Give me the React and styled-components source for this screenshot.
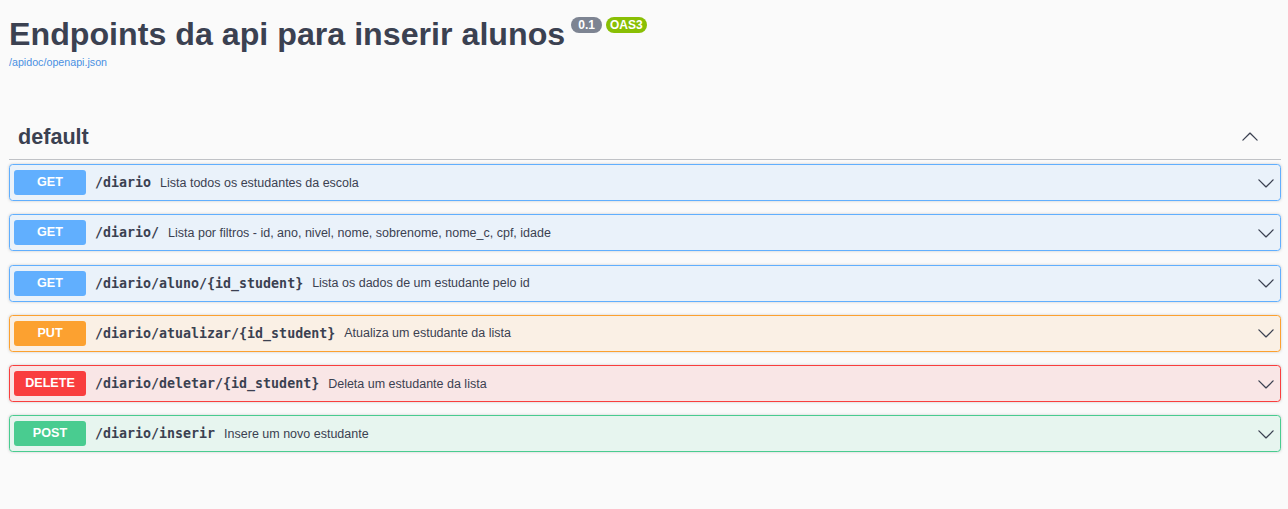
import React from "react";
import styled, { createGlobalStyle } from "styled-components";

const GlobalStyle = createGlobalStyle`
  html, body {
    margin: 0;
    padding: 0;
    background: #fafafa;
  }
  body {
    font-family: "Liberation Sans", Arial, sans-serif;
    color: #3b4151;
  }
`;

const methodColors = {
  GET: "97, 175, 254",
  PUT: "252, 161, 48",
  DELETE: "249, 62, 62",
  POST: "73, 204, 144",
};

const Wrapper = styled.div`
  padding: 0 7px 40px 9px;
`;

const Info = styled.div`
  padding-top: 16px;
  margin-bottom: 43px;
`;

const Title = styled.h2`
  margin: 0;
  font-family: "Liberation Sans", Arial, sans-serif;
  font-size: 32.2px;
  line-height: 36px;
  font-weight: 700;
  color: #3b4151;
  display: flex;
  align-items: flex-start;
`;

const Badges = styled.span`
  display: inline-flex;
  gap: 4px;
  margin-left: 6px;
  margin-top: 1px;
`;

const Badge = styled.span`
  display: inline-block;
  height: 16px;
  line-height: 16px;
  padding: 0 ${(p) => p.$pad}px;
  border-radius: 57px;
  background: ${(p) => p.$bg};
  color: #fff;
  font-size: 12px;
  font-weight: 700;
`;

const SpecLink = styled.a`
  display: block;
  margin-top: 4px;
  font-size: 10.7px;
  line-height: 13px;
  color: #4990e2;
  text-decoration: none;
`;

const TagHeader = styled.div`
  display: flex;
  align-items: center;
  justify-content: space-between;
  padding: 11px 22px 9px 9px;
  border-bottom: 1px solid rgba(59, 65, 81, 0.3);
  margin-bottom: 4px;
`;

const TagName = styled.h3`
  margin: 0;
  font-size: 21.6px;
  line-height: 27px;
  font-weight: 700;
  color: #3b4151;
`;

const Arrow = styled.svg`
  width: 18px;
  height: 18px;
  fill: #3b4151;
  flex: none;
  transform: ${(p) => (p.$up ? "rotate(180deg)" : "none")};
`;

const Operation = styled.div`
  display: flex;
  align-items: center;
  margin-bottom: 13.3px;
  padding: 5px 5px 5px 4px;
  border: 1px solid rgb(${(p) => methodColors[p.$method]});
  border-radius: 3.6px;
  background: rgba(${(p) => methodColors[p.$method]}, 0.1);
  box-shadow: 0 0 3px rgba(0, 0, 0, 0.19);
`;

const Method = styled.span`
  flex: none;
  width: 72px;
  height: 25px;
  line-height: 25px;
  border-radius: 3px;
  background: rgb(${(p) => methodColors[p.$method]});
  color: #fff;
  text-align: center;
  font-family: "Liberation Sans", Arial, sans-serif;
  font-size: 12.6px;
  font-weight: 700;
`;

const Path = styled.span`
  padding: 0 9px;
  font-family: "DejaVu Sans Mono", "Liberation Mono", monospace;
  font-size: 13.3px;
  font-weight: 700;
  color: #3b4151;
  white-space: nowrap;
`;

const Description = styled.span`
  flex: 1;
  font-size: 12.5px;
  color: #3b4151;
  white-space: nowrap;
`;

const ArrowIcon = ({ up }) => (
  <Arrow viewBox="0 0 20 20" $up={up}>
    <path d="M17.418 6.109c.272-.268.709-.268.979 0s.271.701 0 .969l-7.908 7.83c-.27.268-.707.268-.979 0l-7.908-7.83c-.27-.268-.27-.701 0-.969.271-.268.709-.268.979 0L10 13.25l7.418-7.141z" />
  </Arrow>
);

const operations = [
  { method: "GET", path: "/diario", summary: "Lista todos os estudantes da escola" },
  { method: "GET", path: "/diario/", summary: "Lista por filtros - id, ano, nivel, nome, sobrenome, nome_c, cpf, idade" },
  { method: "GET", path: "/diario/aluno/{id_student}", summary: "Lista os dados de um estudante pelo id" },
  { method: "PUT", path: "/diario/atualizar/{id_student}", summary: "Atualiza um estudante da lista" },
  { method: "DELETE", path: "/diario/deletar/{id_student}", summary: "Deleta um estudante da lista" },
  { method: "POST", path: "/diario/inserir", summary: "Insere um novo estudante" },
];

function App() {
  return (
    <>
      <GlobalStyle />
      <Wrapper>
        <Info>
          <Title>
            Endpoints da api para inserir alunos
            <Badges>
              <Badge $bg="#7d8492" $pad={7}>0.1</Badge>
              <Badge $bg="#89bf04" $pad={4}>OAS3</Badge>
            </Badges>
          </Title>
          <SpecLink href="#">/apidoc/openapi.json</SpecLink>
        </Info>

        <TagHeader>
          <TagName>default</TagName>
          <ArrowIcon up />
        </TagHeader>

        {operations.map((op, i) => (
          <Operation key={i} $method={op.method}>
            <Method $method={op.method}>{op.method}</Method>
            <Path>{op.path}</Path>
            <Description>{op.summary}</Description>
            <ArrowIcon />
          </Operation>
        ))}
      </Wrapper>
    </>
  );
}

export default App;
